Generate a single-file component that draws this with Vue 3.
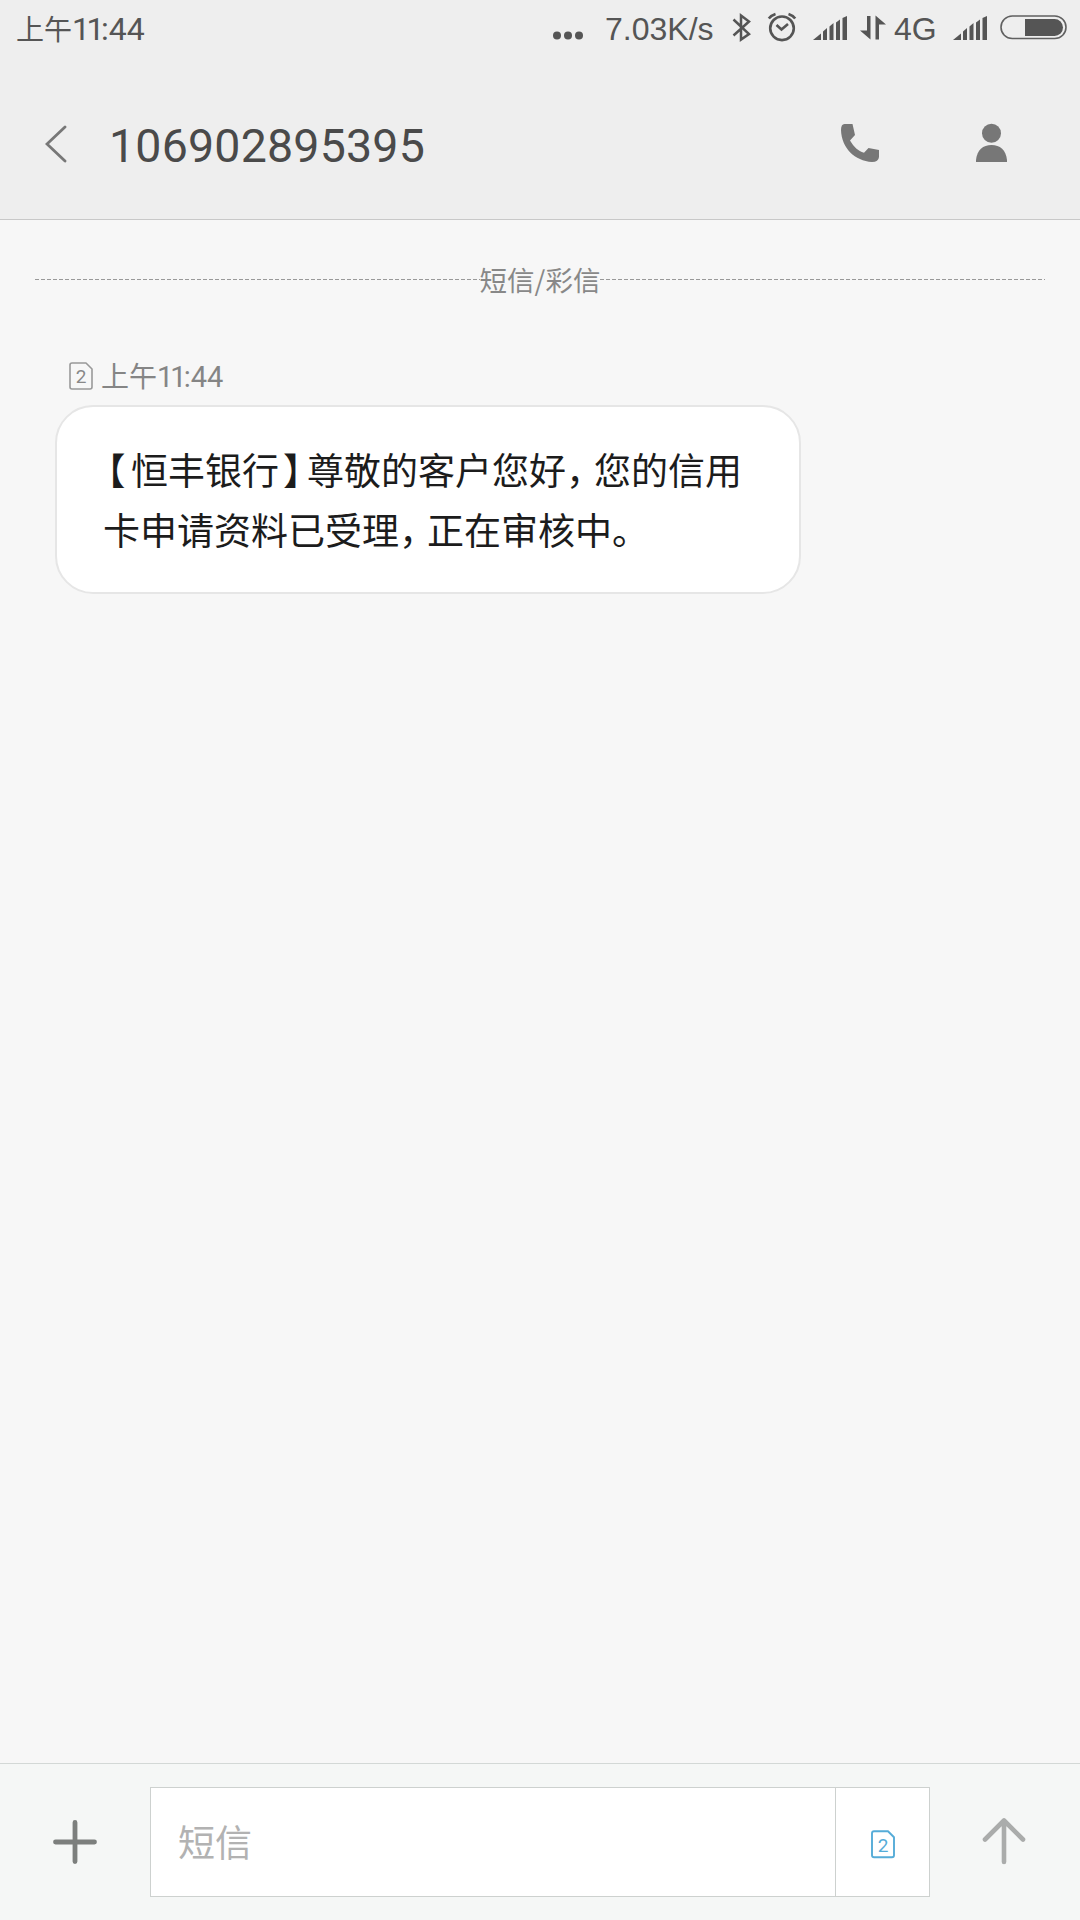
<template>
  <div class="phone">
    <!-- Status bar -->
    <div class="status-bar">
      <div class="clock"><span class="han">上午</span><span class="one">11</span><span class="num">:44</span></div>
      <div class="status-icons">
        <svg class="dots" width="30" height="56" viewBox="0 0 30 56">
          <circle v-for="x in [4, 15, 26]" :key="x" :cx="x" cy="35.5" r="4" fill="#555" />
        </svg>
        <span class="speed">7.03K/s</span>
        <svg class="bluetooth" width="19" height="56" viewBox="0 0 19 56">
          <path d="M1.5 19.500L17 34L9 39.500V15.500L17 21.500L1.500 35.500" fill="none" stroke="#555" stroke-width="2.5" />
        </svg>
        <svg class="alarm" width="30" height="56" viewBox="0 0 30 56">
          <g fill="none" stroke="#555" stroke-width="2.600">
            <circle cx="15" cy="28.300" r="11.800" />
            <path d="M9.500 25L14.500 29.500L21 24" />
            <path d="M1.800 18.500Q4 15.500 8.500 14M28.200 18.500Q26 15.500 21.500 14" />
          </g>
        </svg>
        <svg class="signal" width="34" height="56" viewBox="0 0 34 56">
          <path v-for="bar in signalBars" :key="bar" :d="bar" fill="#555" />
        </svg>
        <svg class="transfer" width="26" height="56" viewBox="0 0 26 56">
          <path d="M7 16H10.500V39.500L0 30.500H7ZM15.500 39.500V15.500L26 24.500H19V39.500Z" fill="#555" />
        </svg>
        <span class="network">4G</span>
        <svg class="signal" width="34" height="56" viewBox="0 0 34 56">
          <path v-for="bar in signalBars" :key="bar" :d="bar" fill="#555" />
        </svg>
        <svg width="67" height="56" viewBox="0 0 67 56">
          <rect x="1" y="16" width="65" height="22.500" rx="11.250" fill="none" stroke="#606060" stroke-width="1.600" />
          <path d="M25 19H54.500A8.500 8.500 0 0 1 54.500 36H25Z" fill="#555" />
        </svg>
      </div>
    </div>

    <!-- Header -->
    <div class="header">
      <svg class="back" width="24" height="40" viewBox="0 0 24 40">
        <path d="M20 3L2 20L20 37" fill="none" stroke="#777" stroke-width="2.800" stroke-linecap="round" />
      </svg>
      <h1>{{ sender }}</h1>
      <svg class="call" width="38" height="40" viewBox="0 0 38 40">
        <path d="M3.500 1H11.500L14 12L9 17.500C13 24 17 28 23 29.800L27.500 25L38 27V34Q37.500 39 31 39C14 38 .5 25 0 7Q0 1 3.500 1Z" fill="#777" />
      </svg>
      <svg class="contact" width="32" height="40" viewBox="0 0 32 40">
        <circle cx="15.500" cy="10.300" r="9.500" fill="#777" />
        <path d="M0 39V37C1 27 7 22 15.500 22S30 27 31 37V39Z" fill="#777" />
      </svg>
    </div>

    <!-- Conversation -->
    <div class="conversation">
      <div class="divider">
        <i></i><span>短信/彩信</span><i></i>
      </div>
      <div class="meta">
        <svg width="24" height="28" viewBox="0 0 24 28">
          <path :d="simOutline" fill="none" stroke="#999" stroke-width="1.600" stroke-linejoin="round" />
          <text x="12" y="21" text-anchor="middle" class="sim-num grey">2</text>
        </svg>
        <div class="time"><span class="han">上午</span><span class="one">11</span><span class="num">:44</span></div>
      </div>
      <div class="bubble">
        <p v-for="(line, i) in lines" :key="i">
          <span v-for="(char, j) in line" :key="j" :class="punctuation[char]">{{ char }}</span>
        </p>
      </div>
    </div>

    <!-- Composer -->
    <div class="composer">
      <svg class="plus" width="44" height="44" viewBox="0 0 44 44">
        <path d="M2.500 22H41.500M22 2.500V41.500" stroke="#7c7f7d" stroke-width="4.800" stroke-linecap="round" />
      </svg>
      <div class="input-box">
        <div class="field">短信</div>
        <div class="sim-switch">
          <svg width="24" height="29" viewBox="0 0 24 28.500">
            <path :d="simOutline" fill="none" stroke="#55acd8" stroke-width="1.900" stroke-linejoin="round" />
            <text x="12" y="21.500" text-anchor="middle" class="sim-num blue">2</text>
          </svg>
        </div>
      </div>
      <svg class="send" width="44" height="48" viewBox="0 0 44 48">
        <path d="M22 45V3.500M3 22.500L22 3.500L41 22.500" fill="none" stroke="#aaacab" stroke-width="4.600" stroke-linecap="round" stroke-linejoin="round" />
      </svg>
    </div>
  </div>
</template>

<script setup>
const sender = '106902895395'

const lines = ['【恒丰银行】尊敬的客户您好，您的信用', '卡申请资料已受理，正在审核中。']

// full-width punctuation is set tighter than the other glyphs
const punctuation = {
  '【': 'half open',
  '】': 'half close',
  '，': 'half comma'
}

const simOutline = 'M3 1H17L23 7V25Q23 27 21 27H3Q1 27 1 25V3Q1 1 3 1Z'

const signalBars = [
  'M0 40L8 33.500V40Z',
  'M10 40V31.500L14 28V40Z',
  'M16.500 40V26.500L20.500 23V40Z',
  'M23 40V22.500L27 19.500V40Z',
  'M29.500 40V18L34 16V40Z'
]
</script>

<style>
body {
  margin: 0;
  background: #f7f7f7;
}
</style>

<style scoped>
.phone {
  width: 1080px;
  height: 1920px;
  display: flex;
  flex-direction: column;
  background: #f7f7f7;
  font-family: "Noto Sans CJK SC", sans-serif;
  overflow: hidden;
}

svg {
  display: block;
  flex: none;
}

.status-bar {
  height: 56px;
  display: flex;
  justify-content: space-between;
  padding: 0 13px 0 16px;
  background: #eee;
  color: #555;
}

.clock,
.time {
  display: flex;
  align-items: baseline;
  white-space: nowrap;
}

.clock {
  line-height: 56px;
  font-size: 28px;
}

.one,
.num {
  font-family: Roboto, sans-serif;
}

.clock .one,
.clock .num {
  font-size: 32px;
}

.clock .one {
  letter-spacing: -3.5px;
}

.status-icons {
  display: flex;
}

.dots {
  margin-right: 22px;
}

.speed,
.network {
  font-family: "Liberation Sans", sans-serif;
  font-size: 32px;
  line-height: 59px;
}

.speed {
  width: 127px;
}

.network {
  width: 59px;
}

.bluetooth,
.alarm {
  margin-right: 16px;
}

.signal {
  margin-right: 13px;
}

.transfer {
  margin-right: 8px;
}

.header {
  height: 164px;
  display: flex;
  align-items: flex-start;
  padding: 67px 72px 0 45px;
  box-sizing: border-box;
  background: #eee;
  border-bottom: 1px solid #c8c8c8;
}

.back {
  margin-top: 1px;
}

.header h1 {
  flex: 1;
  margin: 0 0 0 40px;
  font-family: Roboto, sans-serif;
  font-size: 46.5px;
  font-weight: 400;
  line-height: 46px;
  letter-spacing: 0.2px;
  color: #4a4a4a;
}

.call {
  margin-right: 97px;
}

.conversation {
  flex: 1;
  padding: 40px 35px 0;
}

.divider {
  height: 38px;
  display: flex;
  align-items: center;
  color: #888;
  font-size: 27.5px;
  line-height: 38px;
}

.divider i {
  flex: 1;
  height: 1px;
  background: repeating-linear-gradient(90deg, #999 0 4px, transparent 4px 6px);
}

.meta {
  height: 30px;
  display: flex;
  align-items: center;
  margin: 63px 0 0 34px;
}

.time {
  margin-left: 8px;
  line-height: 30px;
  font-size: 28px;
  color: #858585;
}

.time .one,
.time .num {
  font-size: 29px;
}

.time .one {
  letter-spacing: -3px;
}

.sim-num {
  font-family: Roboto, sans-serif;
  font-size: 19px;
}

.grey {
  fill: #888;
}

.blue {
  fill: #55acd8;
}

.bubble {
  width: 746px;
  height: 189px;
  margin: 14px 0 0 20px;
  padding: 32px 45px 0 46px;
  box-sizing: border-box;
  background: #fff;
  border: 2px solid #e6e6e6;
  border-radius: 38px;
}

.bubble p {
  margin: 0;
  font-size: 37px;
  line-height: 60px;
  white-space: nowrap;
  color: #1c1c1c;
}

.half {
  font-feature-settings: "halt";
}

.open {
  padding: 0 5.5px 0 4px;
}

.close {
  padding: 0 5.5px 0 4px;
}

.comma {
  padding-right: 9.5px;
}

.composer {
  height: 157px;
  display: flex;
  box-sizing: border-box;
  padding: 23px 54px 0 52px;
  background: #f5f7f6;
  border-top: 1px solid #d3d8d6;
}

.plus {
  margin: 33px 53px 0 1px;
}

.input-box {
  width: 780px;
  height: 110px;
  display: flex;
  box-sizing: border-box;
  background: #fff;
  border: 1px solid #cdd1cf;
}

.field {
  flex: 1;
  padding-left: 27px;
  font-size: 37px;
  line-height: 106px;
  color: #b2b2b2;
}

.sim-switch {
  width: 94px;
  display: flex;
  align-items: center;
  justify-content: center;
  padding-top: 5px;
  box-sizing: border-box;
  border-left: 1px solid #cdd1cf;
}

.send {
  margin: 30px 0 0 52px;
}
</style>
